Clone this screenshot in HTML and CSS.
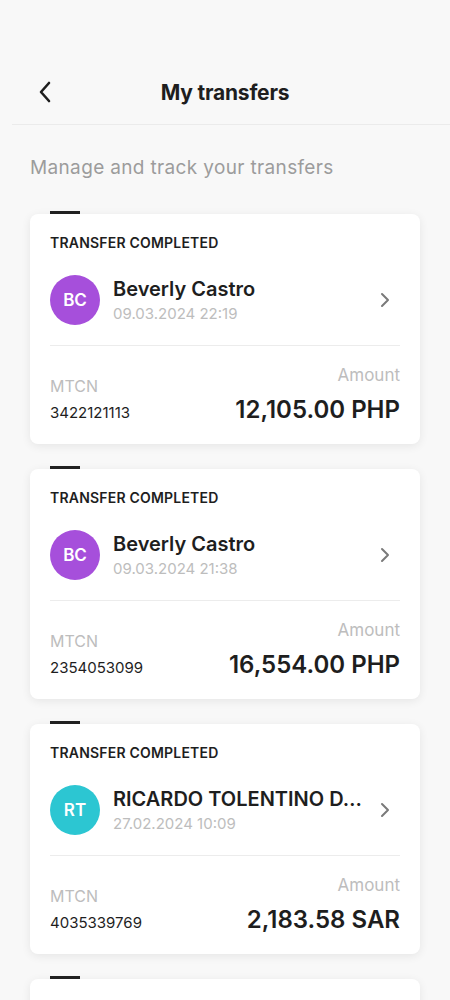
FILE: index.html
```html
<!DOCTYPE html>
<html>
<head>
    <title>My transfers</title>
    <link rel="stylesheet" href="styles.css">
</head>
<body>
    <div class="status-bar"></div>
    <header class="topbar">
        <a href="#" class="back">
            <svg width="14" height="22" viewBox="0 0 14 22"><path d="M11 2 L3 11 L11 20" fill="none" stroke="#1e1e1e" stroke-width="2.6" stroke-linecap="round" stroke-linejoin="round"/></svg>
        </a>
        <h1>My transfers</h1>
    </header>

    <p class="subtitle">Manage and track your transfers</p>

    <div class="transfer-list">
        <div class="transfer">
            <div class="tab-mark"></div>
            <div class="transfer-card">
                <div class="status">TRANSFER COMPLETED</div>
                <div class="recipient">
                    <div class="avatar purple">BC</div>
                    <div class="recipient-info">
                        <div class="name">Beverly Castro</div>
                        <div class="date">09.03.2024 22:19</div>
                    </div>
                    <svg class="chevron" width="10" height="16" viewBox="0 0 10 16"><path d="M2 2 L8 8 L2 14" fill="none" stroke="#7a7a7a" stroke-width="2" stroke-linecap="round" stroke-linejoin="round"/></svg>
                </div>
                <div class="card-footer">
                    <div class="mtcn">
                        <div class="label">MTCN</div>
                        <div class="mtcn-number">3422121113</div>
                    </div>
                    <div class="amount">
                        <div class="label">Amount</div>
                        <div class="amount-value">12,105.00 PHP</div>
                    </div>
                </div>
            </div>
        </div>

        <div class="transfer">
            <div class="tab-mark"></div>
            <div class="transfer-card">
                <div class="status">TRANSFER COMPLETED</div>
                <div class="recipient">
                    <div class="avatar purple">BC</div>
                    <div class="recipient-info">
                        <div class="name">Beverly Castro</div>
                        <div class="date">09.03.2024 21:38</div>
                    </div>
                    <svg class="chevron" width="10" height="16" viewBox="0 0 10 16"><path d="M2 2 L8 8 L2 14" fill="none" stroke="#7a7a7a" stroke-width="2" stroke-linecap="round" stroke-linejoin="round"/></svg>
                </div>
                <div class="card-footer">
                    <div class="mtcn">
                        <div class="label">MTCN</div>
                        <div class="mtcn-number">2354053099</div>
                    </div>
                    <div class="amount">
                        <div class="label">Amount</div>
                        <div class="amount-value">16,554.00 PHP</div>
                    </div>
                </div>
            </div>
        </div>

        <div class="transfer">
            <div class="tab-mark"></div>
            <div class="transfer-card">
                <div class="status">TRANSFER COMPLETED</div>
                <div class="recipient">
                    <div class="avatar teal">RT</div>
                    <div class="recipient-info">
                        <div class="name">RICARDO TOLENTINO D…</div>
                        <div class="date">27.02.2024 10:09</div>
                    </div>
                    <svg class="chevron" width="10" height="16" viewBox="0 0 10 16"><path d="M2 2 L8 8 L2 14" fill="none" stroke="#7a7a7a" stroke-width="2" stroke-linecap="round" stroke-linejoin="round"/></svg>
                </div>
                <div class="card-footer">
                    <div class="mtcn">
                        <div class="label">MTCN</div>
                        <div class="mtcn-number">4035339769</div>
                    </div>
                    <div class="amount">
                        <div class="label">Amount</div>
                        <div class="amount-value">2,183.58 SAR</div>
                    </div>
                </div>
            </div>
        </div>

        <div class="transfer">
            <div class="tab-mark"></div>
            <div class="transfer-card empty"></div>
        </div>
    </div>
</body>
</html>
```

FILE: styles.css
```css
body {
    font-family: Inter, "Noto Sans", sans-serif;
    margin: 0;
    padding: 0;
    background-color: #f8f8f8;
    color: #1e1e1e;
}
.status-bar {
    height: 60px;
}
.topbar {
    height: 64px;
    margin-left: 12px;
    border-bottom: 1px solid #ebebeb;
    display: flex;
    align-items: center;
    justify-content: center;
    position: relative;
}
.back {
    position: absolute;
    left: 26px;
    top: 21px;
    display: flex;
}
.topbar h1 {
    margin: 0 0 0 -12px;
    font-size: 21px;
    font-weight: 700;
    letter-spacing: -0.2px;
}
.subtitle {
    margin: 31px 30px 0;
    font-size: 19px;
    line-height: 24px;
    color: #9c9c9c;
    letter-spacing: 0.35px;
}
.transfer-list {
    padding: 31px 30px 0;
}
.transfer {
    margin-bottom: 22px;
}
.tab-mark {
    width: 30px;
    height: 3px;
    margin-left: 20px;
    background-color: #222;
}
.transfer-card {
    background-color: #fff;
    border-radius: 8px;
    box-shadow: 0 2px 10px rgba(0, 0, 0, 0.08);
    padding: 20px 20px 19px;
}
.transfer-card.empty {
    height: 200px;
}
.status {
    font-size: 14px;
    line-height: 18px;
    font-weight: 600;
    letter-spacing: 0.2px;
}
.recipient {
    margin-top: 23px;
    display: flex;
    align-items: center;
    padding-bottom: 20px;
    border-bottom: 1px solid #ececec;
}
.avatar {
    width: 50px;
    height: 50px;
    border-radius: 50%;
    color: #fff;
    font-size: 17px;
    font-weight: 600;
    display: flex;
    align-items: center;
    justify-content: center;
    flex-shrink: 0;
}
.avatar.purple {
    background-color: #a64fdb;
}
.avatar.teal {
    background-color: #2cc6d2;
}
.recipient-info {
    margin-left: 13px;
    flex: 1;
}
.name {
    font-size: 20px;
    line-height: 24px;
    font-weight: 600;
}
.date {
    margin-top: 3px;
    font-size: 15px;
    line-height: 20px;
    color: #bdbdbd;
}
.chevron {
    margin-right: 10px;
}
.card-footer {
    display: flex;
    justify-content: space-between;
    align-items: flex-end;
    padding-top: 19px;
}
.label {
    font-size: 17px;
    line-height: 20px;
    color: #bdbdbd;
}
.mtcn {
    padding-bottom: 2px;
}
.mtcn .label {
    font-size: 16px;
}
.mtcn-number {
    margin-top: 7px;
    font-size: 15px;
    line-height: 20px;
}
.amount {
    text-align: right;
}
.amount-value {
    margin-top: 10px;
    font-size: 24px;
    line-height: 30px;
    font-weight: 600;
}
```
